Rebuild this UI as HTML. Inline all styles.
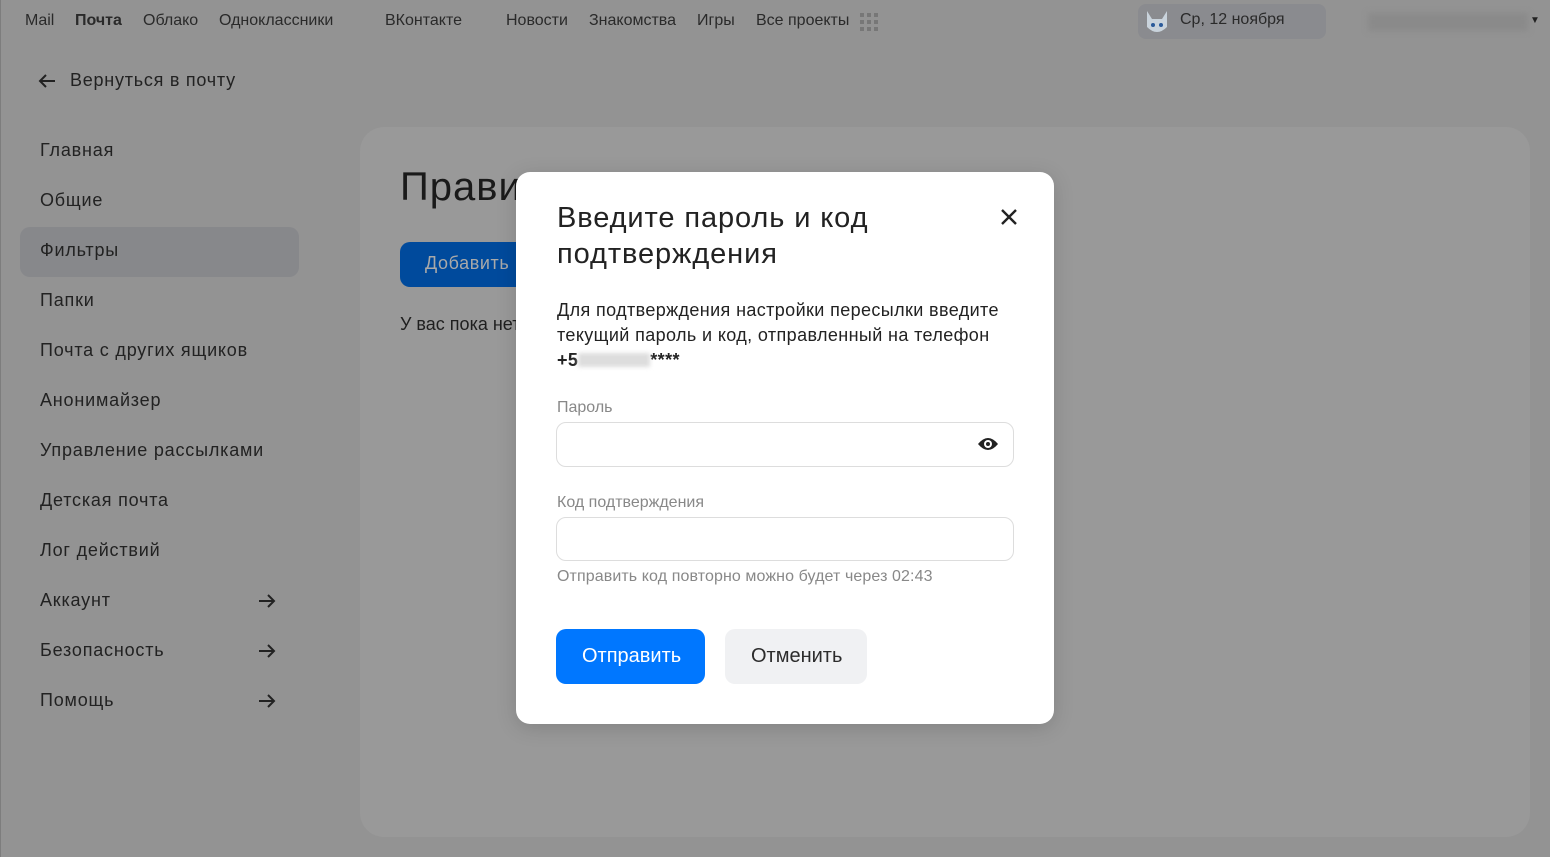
<!DOCTYPE html>
<html><head><meta charset="utf-8"><style>
*{margin:0;padding:0;box-sizing:border-box}
body{width:1550px;height:857px;background:#939393;font-family:"Liberation Sans",sans-serif;color:#1f1f1f;position:relative;overflow:hidden}
.a{position:absolute;white-space:nowrap}
.top{font-size:16px;top:12px;color:#2a2a2a}
.side{font-size:18px;left:40px;color:#222;letter-spacing:0.8px}
</style></head><body>
<div style="position:absolute;left:0;top:0;width:1px;height:857px;background:#7d7d7d"></div>
<span class="a top" style="left:25px">Mail</span>
<span class="a top" style="left:75px;font-weight:bold">Почта</span>
<span class="a top" style="left:143px">Облако</span>
<span class="a top" style="left:219px">Одноклассники</span>
<span class="a top" style="left:385px">ВКонтакте</span>
<span class="a top" style="left:506px">Новости</span>
<span class="a top" style="left:589px">Знакомства</span>
<span class="a top" style="left:697px">Игры</span>
<span class="a top" style="left:756px">Все проекты</span>
<svg class="a" style="left:860px;top:13px" width="18" height="18"><g fill="#777"><rect x="0" y="0" width="4" height="4"/><rect x="7" y="0" width="4" height="4"/><rect x="14" y="0" width="4" height="4"/><rect x="0" y="7" width="4" height="4"/><rect x="7" y="7" width="4" height="4"/><rect x="14" y="7" width="4" height="4"/><rect x="0" y="14" width="4" height="4"/><rect x="7" y="14" width="4" height="4"/><rect x="14" y="14" width="4" height="4"/></g></svg>
<div class="a" style="left:1138px;top:4px;width:188px;height:35px;border-radius:8px;background:#8a8b8f"></div>
<svg class="a" style="left:1143px;top:7px" width="28" height="30"><path d="M4 4 L9 12 L19 12 L24 4 L24 20 Q14 30 4 20Z" fill="#c9d3dc"/><circle cx="10" cy="18" r="2" fill="#2a5a9a"/><circle cx="18" cy="18" r="2" fill="#2a5a9a"/></svg>
<span class="a" style="left:1180px;top:11px;font-size:16px;color:#2a2a2a">Ср, 12 ноября</span>
<div class="a" style="left:1368px;top:13px;width:160px;height:18px;background:#8a8a8a;filter:blur(3px)"></div>
<span class="a" style="left:1530px;top:15px;font-size:10px;color:#222">▼</span>
<svg class="a" style="left:37px;top:71px" width="20" height="20"><path d="M18 10H3M9 4L3 10L9 16" stroke="#222" stroke-width="2" fill="none"/></svg>
<span class="a" style="left:70px;top:70px;font-size:18px;color:#222;letter-spacing:0.75px">Вернуться в почту</span>
<div class="a" style="left:20px;top:227px;width:279px;height:50px;border-radius:10px;background:#87888b"></div>
<span class="a side" style="top:140px">Главная</span>
<span class="a side" style="top:190px">Общие</span>
<span class="a side" style="top:240px">Фильтры</span>
<span class="a side" style="top:290px">Папки</span>
<span class="a side" style="top:340px">Почта с других ящиков</span>
<span class="a side" style="top:390px">Анонимайзер</span>
<span class="a side" style="top:440px">Управление рассылками</span>
<span class="a side" style="top:490px">Детская почта</span>
<span class="a side" style="top:540px">Лог действий</span>
<span class="a side" style="top:590px">Аккаунт</span>
<span class="a side" style="top:640px">Безопасность</span>
<span class="a side" style="top:690px">Помощь</span>
<svg class="a" style="left:257px;top:591px" width="20" height="20"><path d="M2 10H17M11 4L17 10L11 16" stroke="#222" stroke-width="2" fill="none"/></svg>
<svg class="a" style="left:257px;top:641px" width="20" height="20"><path d="M2 10H17M11 4L17 10L11 16" stroke="#222" stroke-width="2" fill="none"/></svg>
<svg class="a" style="left:257px;top:691px" width="20" height="20"><path d="M2 10H17M11 4L17 10L11 16" stroke="#222" stroke-width="2" fill="none"/></svg>
<div class="a" style="left:360px;top:127px;width:1170px;height:710px;border-radius:24px;background:#999"></div>
<span class="a" style="left:400px;top:165px;font-size:40px;color:#1a1a1a;letter-spacing:1px">Правила</span>
<div class="a" style="left:400px;top:242px;width:140px;height:45px;border-radius:10px;background:#004a9c"></div>
<span class="a" style="left:425px;top:253px;font-size:18px;color:#a9a9a9;letter-spacing:0.6px">Добавить</span>
<span class="a" style="left:400px;top:314px;font-size:18px;color:#1f1f1f">У вас пока нет</span>
<div class="a" style="left:516px;top:172px;width:538px;height:552px;border-radius:14px;background:#fff;box-shadow:0 4px 20px rgba(0,0,0,.15)"></div>
<div class="a" style="left:557px;top:200px;font-size:29px;line-height:36px;color:#222;letter-spacing:0.9px">Введите пароль и код<br>подтверждения</div>
<svg class="a" style="left:999px;top:207px" width="20" height="20"><path d="M3 3L17 17M17 3L3 17" stroke="#222" stroke-width="2.4"/></svg>
<div class="a" style="left:557px;top:298px;font-size:18px;line-height:25px;color:#222;letter-spacing:0.38px">Для подтверждения настройки пересылки введите<br>текущий пароль и код, отправленный на телефон<br><b>+5</b><span style="display:inline-block;width:72px;height:14px;background:#ddd;filter:blur(2px);vertical-align:-1px"></span><b>****</b></div>
<span class="a" style="left:557px;top:399px;font-size:16px;color:#888">Пароль</span>
<div class="a" style="left:556px;top:422px;width:458px;height:45px;border:1px solid #ddd;border-radius:10px"></div>
<svg class="a" style="left:977px;top:436px" width="22" height="16"><path d="M1 8Q11 -4 21 8Q11 20 1 8Z" fill="#222"/><circle cx="11" cy="8" r="4" fill="#fff"/><circle cx="11" cy="8" r="2" fill="#222"/></svg>
<span class="a" style="left:557px;top:494px;font-size:16px;color:#888">Код подтверждения</span>
<div class="a" style="left:556px;top:517px;width:458px;height:44px;border:1px solid #ddd;border-radius:10px"></div>
<span class="a" style="left:557px;top:568px;font-size:16px;color:#888;letter-spacing:0.1px">Отправить код повторно можно будет через 02:43</span>
<div class="a" style="left:556px;top:629px;width:149px;height:55px;border-radius:10px;background:#0077ff"></div>
<span class="a" style="left:582px;top:645px;font-size:20px;color:#fff">Отправить</span>
<div class="a" style="left:725px;top:629px;width:142px;height:55px;border-radius:10px;background:#f0f1f3"></div>
<span class="a" style="left:751px;top:645px;font-size:20px;color:#2c2c2c">Отменить</span>
</body></html>
